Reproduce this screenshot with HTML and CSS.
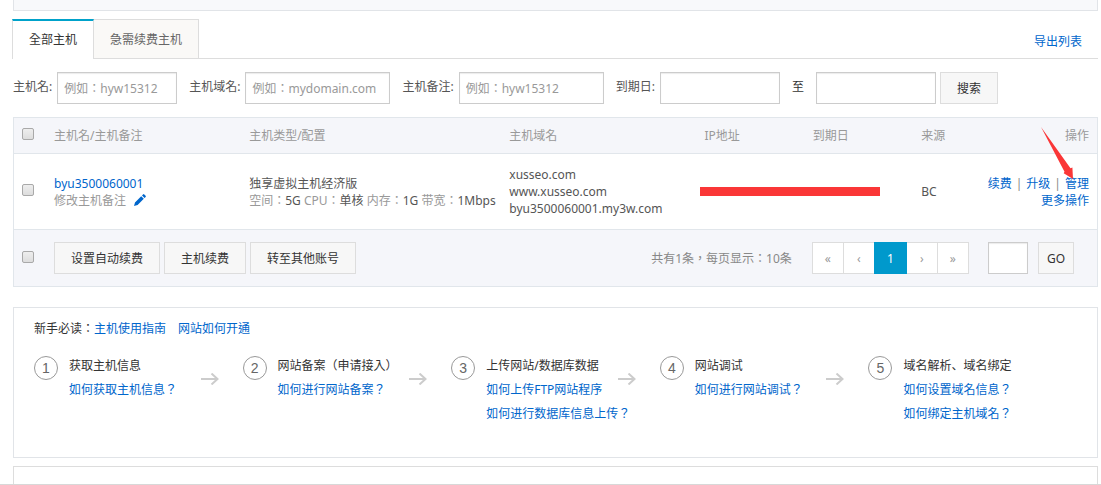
FILE: index.html
```html
<!DOCTYPE html>
<html lang="zh-CN">
<head>
<meta charset="utf-8">
<title>主机管理</title>
<link rel="stylesheet" href="styles.css">
</head>
<body>
<main class="page">
  <div class="notice"></div>

  <nav class="tabs">
    <a class="tab tab-active" href="#all">全部主机</a>
    <a class="tab" href="#renew">急需续费主机</a>
    <a class="export" href="#export">导出列表</a>
  </nav>

  <form class="filters">
    <div class="field">
      <label for="f-name">主机名:</label>
      <input id="f-name" class="box box-short" type="text" placeholder="例如：hyw15312">
    </div>
    <div class="field">
      <label for="f-domain">主机域名:</label>
      <input id="f-domain" class="box box-long" type="text" placeholder="例如：mydomain.com">
    </div>
    <div class="field">
      <label for="f-note">主机备注:</label>
      <input id="f-note" class="box box-long" type="text" placeholder="例如：hyw15312">
    </div>
    <div class="field">
      <label for="f-from">到期日:</label>
      <input id="f-from" class="box box-short" type="text">
    </div>
    <label class="until" for="f-to">至</label>
    <div class="field">
      <input id="f-to" class="box box-short" type="text">
      <button class="btn" type="button">搜索</button>
    </div>
  </form>

  <table class="hosts">
    <colgroup>
      <col class="c-check"><col class="c-name"><col class="c-type"><col class="c-domain"><col class="c-ip"><col class="c-date"><col class="c-from"><col class="c-ops">
    </colgroup>
    <thead>
      <tr>
        <th><input class="check" type="checkbox" aria-label="全选"></th>
        <th>主机名/主机备注</th>
        <th>主机类型/配置</th>
        <th>主机域名</th>
        <th>IP地址</th>
        <th>到期日</th>
        <th>来源</th>
        <th class="ops">操作</th>
      </tr>
    </thead>
    <tbody>
      <tr>
        <td><input class="check" type="checkbox" aria-label="选择 byu3500060001"></td>
        <td>
          <a href="#host">byu3500060001</a><br>
          <span class="muted">修改主机备注</span>
          <svg class="pencil" viewBox="0 0 12 12" width="12" height="12" aria-hidden="true"><path d="M0 12l1-3.600L7.200 2.200l2.600 2.600L3.600 11zM8 1.400L9 .4q.6-.6 1.300 0l1.300 1.300q.6.600 0 1.300l-1 1z"/></svg>
        </td>
        <td class="nowrap">
          独享虚拟主机经济版<br>
          <span class="muted">空间：</span>5G <span class="muted">CPU：</span>单核 <span class="muted">内存：</span>1G <span class="muted">带宽：</span>1Mbps
        </td>
        <td>xusseo.com<br>www.xusseo.com<br>byu3500060001.my3w.com</td>
        <td class="masked" colspan="2"><div class="mask"></div></td>
        <td>BC</td>
        <td class="ops">
          <a href="#renew">续费</a><span class="sep">|</span><a href="#upgrade">升级</a><span class="sep">|</span><a href="#manage">管理</a><br>
          <a href="#more">更多操作</a>
          <svg class="pointer" viewBox="0 0 34 54" width="34" height="54" aria-hidden="true"><path d="M0 0L23.500 44.800 22.700 46.200 32 52 31.400 40.400 29.500 41.200Z"/></svg>
        </td>
      </tr>
    </tbody>
    <tfoot>
      <tr>
        <td><input class="check" type="checkbox" aria-label="全选"></td>
        <td colspan="7">
          <div class="toolbar">
            <button class="btn" type="button">设置自动续费</button>
            <button class="btn" type="button">主机续费</button>
            <button class="btn" type="button">转至其他账号</button>
            <span class="total">共有1条，每页显示：10条</span>
            <div class="pager">
              <button type="button">«</button>
              <button type="button">‹</button>
              <button type="button" class="current">1</button>
              <button type="button">›</button>
              <button type="button">»</button>
            </div>
            <input class="box box-page" type="text" aria-label="页码">
            <button class="btn btn-go" type="button">GO</button>
          </div>
        </td>
      </tr>
    </tfoot>
  </table>

  <section class="guide">
    <p class="guide-head">新手必读：<a href="#guide">主机使用指南</a><a class="second" href="#open">网站如何开通</a></p>
    <ol class="steps">
      <li class="step">
        <span class="num">1</span>
        <div class="step-text"><span>获取主机信息</span><a href="#s1">如何获取主机信息？</a></div>
        <svg class="arrow" viewBox="0 0 18 12" width="18" height="12" aria-hidden="true"><path d="M0 6h16.500M10.500.500L16.500 6l-6 5.500"/></svg>
      </li>
      <li class="step">
        <span class="num">2</span>
        <div class="step-text"><span>网站备案（申请接入）</span><a href="#s2">如何进行网站备案？</a></div>
        <svg class="arrow" viewBox="0 0 18 12" width="18" height="12" aria-hidden="true"><path d="M0 6h16.500M10.500.500L16.500 6l-6 5.500"/></svg>
      </li>
      <li class="step">
        <span class="num">3</span>
        <div class="step-text"><span>上传网站/数据库数据</span><a href="#s3">如何上传FTP网站程序</a><a href="#s3b">如何进行数据库信息上传？</a></div>
        <svg class="arrow" viewBox="0 0 18 12" width="18" height="12" aria-hidden="true"><path d="M0 6h16.500M10.500.500L16.500 6l-6 5.500"/></svg>
      </li>
      <li class="step">
        <span class="num">4</span>
        <div class="step-text"><span>网站调试</span><a href="#s4">如何进行网站调试？</a></div>
        <svg class="arrow" viewBox="0 0 18 12" width="18" height="12" aria-hidden="true"><path d="M0 6h16.500M10.500.500L16.500 6l-6 5.500"/></svg>
      </li>
      <li class="step">
        <span class="num">5</span>
        <div class="step-text"><span class="low-comma">域名解析、域名绑定</span><a href="#s5">如何设置域名信息？</a><a href="#s5b">如何绑定主机域名？</a></div>
      </li>
    </ol>
  </section>

  <section class="panel"></section>
</main>
</body>
</html>
```

FILE: styles.css
```css
* {
  box-sizing: border-box;
}

body {
  margin: 0;
  background: #fff;
  color: #555;
  font: 12px/17px "Noto Sans", "Noto Sans CJK TC", sans-serif;
  font-feature-settings: "locl" 0; /* keeps full-width punctuation centred */
  border-bottom: 1px solid #d8d8d8;
}

a {
  color: #06c;
  text-decoration: none;
}

button,
input {
  font: inherit;
  font-feature-settings: inherit;
  margin: 0;
}

.page {
  padding: 0 3px 0 13px;
}

.notice {
  height: 11px;
  background: #f8f9fb;
  border: 1px solid #e1e4e8;
  border-top: 0;
}

/* Tabs */
.tabs {
  display: flex;
  margin: 8px 0 0 -1px;
  border-bottom: 1px solid #ddd;
}

.tab {
  height: 39px;
  padding: 0 16px;
  border: 1px solid #ddd;
  border-width: 1px 1px 0 0;
  background: #faf9f7;
  color: #666;
  line-height: 40px;
}

.tab-active {
  height: 40px;
  margin-bottom: -1px;
  border-width: 2px 1px 0 1px;
  border-top-color: #00a2ca;
  background: #fff;
  color: #333;
  line-height: 38px;
}

.export {
  align-self: flex-end;
  margin-left: auto;
  padding-right: 16px;
  line-height: 32px;
}

/* Filters */
.filters {
  display: flex;
  gap: 12px;
  padding: 13px 0;
}

.field {
  display: flex;
  gap: 4px;
}

.filters label {
  line-height: 30px;
  white-space: nowrap;
}

.field label {
  margin-right: 1px;
}

.filters .until {
  color: #333;
}

.box {
  height: 32px;
  padding: 0 6px;
  border: 1px solid #ccc;
  background: #fff;
  box-shadow: inset 0 1px 1px rgba(0, 0, 0, 0.08);
  color: #555;
}

.box::placeholder {
  color: #999;
  opacity: 1;
}

.box-short {
  width: 120px;
}

.box-long {
  width: 145px;
}

.box-page {
  width: 40px;
  margin-left: 16px;
}

.btn {
  height: 32px;
  padding: 0 16px;
  border: 1px solid #ddd;
  background: #f7f7f7;
  color: #333;
  white-space: nowrap;
}

.btn-go {
  margin-left: 6px;
  padding: 0 8px;
}

/* Host table */
.hosts {
  width: 100%;
  border: 1px solid #e1e6eb;
  border-collapse: collapse;
  table-layout: fixed;
}

.c-check { width: 3%; }
.c-name { width: 18%; }
.c-type { width: 24%; }
.c-domain { width: 18%; }
.c-ip { width: 10%; }
.c-date { width: 10%; }
.c-from { width: 6%; }
.c-ops { width: 11%; }

.hosts th,
.hosts td {
  padding: 0 8px;
  border-bottom: 1px solid #e1e6eb;
  text-align: left;
  vertical-align: middle;
}

.hosts th {
  height: 36px;
  color: #999;
  font-weight: normal;
}

.hosts thead,
.hosts tfoot {
  background: #f5f6fa;
}

.hosts tbody td {
  height: 76px;
}

.hosts tfoot td {
  height: 57px;
}

.hosts .nowrap {
  white-space: nowrap;
}

.hosts .ops {
  position: relative;
  text-align: right;
  white-space: nowrap;
}

.hosts .masked {
  padding: 0 33px 0 4px;
}

.mask {
  height: 9px;
  background: #fa3637;
}

.muted {
  color: #999;
}

.sep {
  margin: 0 4px;
  color: #888;
}

.check {
  display: block;
  width: 12px;
  height: 12px;
  margin-bottom: 3px;
  appearance: none;
  border: 1px solid #a9a9a9;
  border-radius: 2px;
  background: linear-gradient(#eee, #ddd);
}

.check:checked {
  background: #09c;
}

.pencil {
  margin-left: 5px;
  fill: #06c;
  vertical-align: -1px;
}

.pointer {
  position: absolute;
  top: -27px;
  right: 22px;
  fill: #fa3637;
}

.toolbar {
  display: flex;
  align-items: center;
  gap: 4px;
  padding-right: 15px;
}

.total {
  margin-left: auto;
  color: #888;
  white-space: nowrap;
}

.pager {
  display: flex;
  margin-left: 16px;
}

.pager button {
  height: 32px;
  min-width: 32px;
  margin-right: -1px;
  padding: 0 12px;
  border: 1px solid #ddd;
  background: #fff;
  color: #999;
}

.pager .current {
  z-index: 1;
  border-color: #09c;
  background: #09c;
  color: #fff;
}

/* Beginner guide */
.guide {
  margin-top: 20px;
  padding: 12px 20px 31px;
  border: 1px solid #e1e4e8;
  color: #333;
}

.guide-head {
  margin: 0 0 16px;
  line-height: 18px;
}

.second {
  margin-left: 12px;
}

.steps {
  display: grid;
  grid-template-columns: repeat(5, 1fr);
  margin: 0;
  padding: 0;
  list-style: none;
}

.step {
  position: relative;
  display: flex;
  gap: 11px;
  min-width: 0;
}

.num {
  flex: none;
  width: 24px;
  height: 24px;
  margin-top: 2px;
  border: 1px solid #999;
  border-radius: 50%;
  color: #666;
  font: 14px/23px "Liberation Sans", sans-serif;
  text-align: center;
}

.step-text {
  display: flex;
  flex-direction: column;
  line-height: 24px;
  white-space: nowrap;
}

.low-comma {
  font-family: "Noto Sans", "Noto Sans CJK SC", sans-serif;
}

.arrow {
  position: absolute;
  top: 19px;
  right: 24px;
  fill: none;
  stroke: #ccc;
  stroke-width: 2;
}

.panel {
  height: 18px;
  margin-top: 8px;
  border: 1px solid #ddd;
  border-bottom: 0;
}
```
